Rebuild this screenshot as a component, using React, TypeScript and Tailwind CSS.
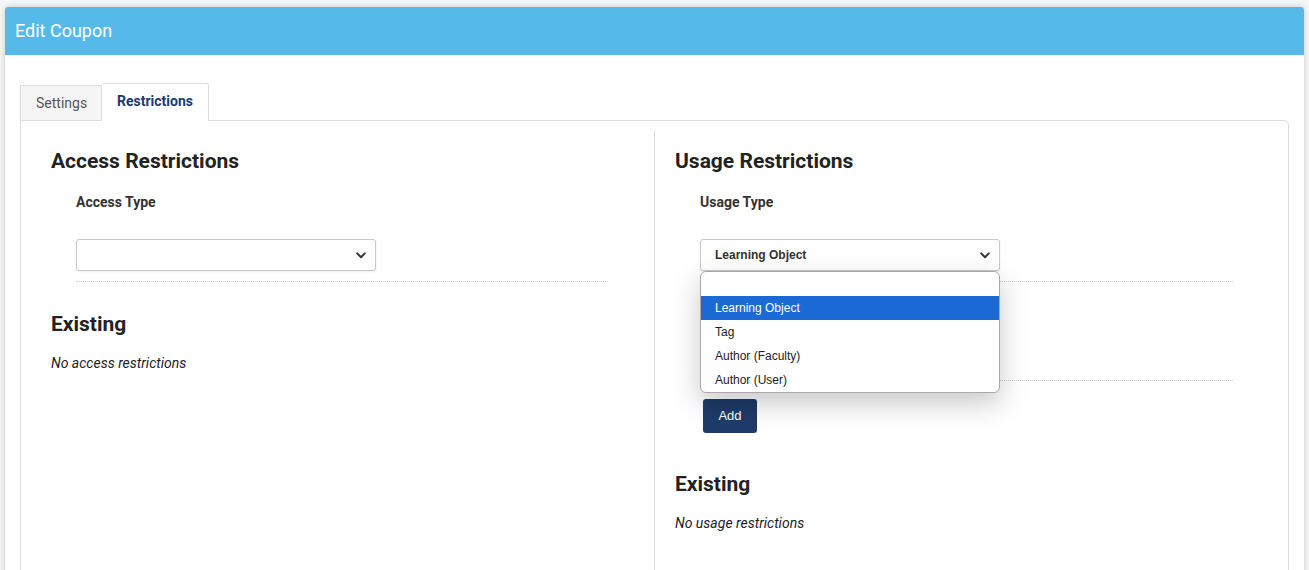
import { useState } from "react";

const usageOptions = ["", "Learning Object", "Tag", "Author (Faculty)", "Author (User)"];

function Chevron() {
  return (
    <svg width="10" height="7" viewBox="0 0 10 7" className="shrink-0">
      <path d="M1.2 1.4 L5 5.2 L8.8 1.4" fill="none" stroke="#333" strokeWidth="2" strokeLinecap="round" strokeLinejoin="round" />
    </svg>
  );
}

function FakeSelect({ value }: { value: string }) {
  return (
    <div className="w-[300px] h-[32px] border border-[#c8c8c8] rounded-[3px] bg-white flex items-center justify-between pl-[14px] pr-[9px] shadow-[0_1px_2px_rgba(0,0,0,0.08)]">
      <span className="font-['Liberation_Sans',Arial,sans-serif] text-[12px] font-bold text-[#333]">{value}</span>
      <Chevron />
    </div>
  );
}

export default function App() {
  const [selected] = useState("Learning Object");

  return (
    <div className="h-[570px] overflow-hidden bg-[#f6f6f6] pt-[7px] px-[5px] font-['Roboto',sans-serif] text-[#222]">
      <div className="bg-white h-[620px] rounded-t-[3px] shadow-[0_0_6px_rgba(0,0,0,0.18)] flex flex-col">
        {/* header */}
        <div className="h-[48px] bg-[#55b9ea] rounded-t-[3px] flex items-center px-[10px]">
          <h1 className="text-white text-[18px] leading-none">Edit Coupon</h1>
        </div>

        <div className="flex-1 flex flex-col px-[15px] pt-[28px]">
          {/* tabs */}
          <div className="flex items-end h-[37px] relative z-10">
            <div className="h-[35px] w-[82px] bg-[#f5f5f5] border border-[#ddd] border-b-0 flex items-center pl-[15px] text-[14px] text-[#555]">
              Settings
            </div>
            <div className="h-[38px] w-[107px] -mb-px bg-white border border-[#ddd] border-b-0 border-l-0 rounded-t-[3px] flex items-start pt-[7px] pl-[15px] text-[14px] font-bold text-[#1e3a6b]">
              Restrictions
            </div>
          </div>

          {/* content */}
          <div className="flex-1 border border-[#ddd] rounded-tr-[5px] pt-[10px] flex">
            {/* left column */}
            <div className="w-[633px] pl-[30px] pt-[18px]">
              <h2 className="text-[21px] leading-[24px] font-bold">Access Restrictions</h2>
              <div className="ml-[25px] w-[532px] border-b border-dotted border-[#ccc] pb-[10px]">
                <div className="mt-[19px] text-[14px] leading-[20px] font-bold text-[#333]">Access Type</div>
                <div className="mt-[27px]">
                  <FakeSelect value="" />
                </div>
              </div>
              <h2 className="mt-[30px] text-[21px] leading-[24px] font-bold">Existing</h2>
              <p className="mt-[17px] text-[14px] leading-[20px] italic">No access restrictions</p>
            </div>

            {/* right column */}
            <div className="flex-1 border-l border-[#ddd] pl-[20px] pt-[18px]">
              <h2 className="text-[21px] leading-[24px] font-bold">Usage Restrictions</h2>
              <div className="relative ml-[25px] w-[533px] pt-[19px]">
                <div className="border-b border-dotted border-[#ccc] pb-[10px]">
                  <div className="text-[14px] leading-[20px] font-bold text-[#333]">Usage Type</div>
                  <div className="mt-[27px]">
                    <FakeSelect value={selected} />
                  </div>
                </div>
                <div className="border-b border-dotted border-[#ccc] pb-[10px]">
                  <div className="mt-[9px] text-[14px] leading-[20px] font-bold text-[#c9772b]">Learning Object</div>
                  <div className="mt-[27px] w-[300px] h-[32px] border border-[#888] rounded-[3px]" />
                </div>
                <button className="mt-[18px] ml-[3px] w-[54px] h-[34px] rounded-[3px] bg-[#1f3b6a] text-white font-['Liberation_Sans',Arial,sans-serif] text-[13px]">
                  Add
                </button>

                {/* open dropdown */}
                <div className="absolute left-0 top-[98px] w-[300px] bg-white border border-[#a9a9a9] rounded-[6px] overflow-hidden shadow-[0_10px_28px_rgba(0,0,0,0.22)] font-['Liberation_Sans',Arial,sans-serif] text-[12px]">
                  {usageOptions.map((o, i) => (
                    <div
                      key={i}
                      className={
                        o === selected
                          ? "h-[24px] flex items-center pl-[14px] bg-[#1a69d4] text-white"
                          : "h-[24px] flex items-center pl-[14px] text-[#222]"
                      }
                    >
                      {o}
                    </div>
                  ))}
                </div>
              </div>
              <h2 className="mt-[39px] text-[21px] leading-[24px] font-bold">Existing</h2>
              <p className="mt-[17px] text-[14px] leading-[20px] italic">No usage restrictions</p>
            </div>
          </div>
        </div>
      </div>
    </div>
  );
}
